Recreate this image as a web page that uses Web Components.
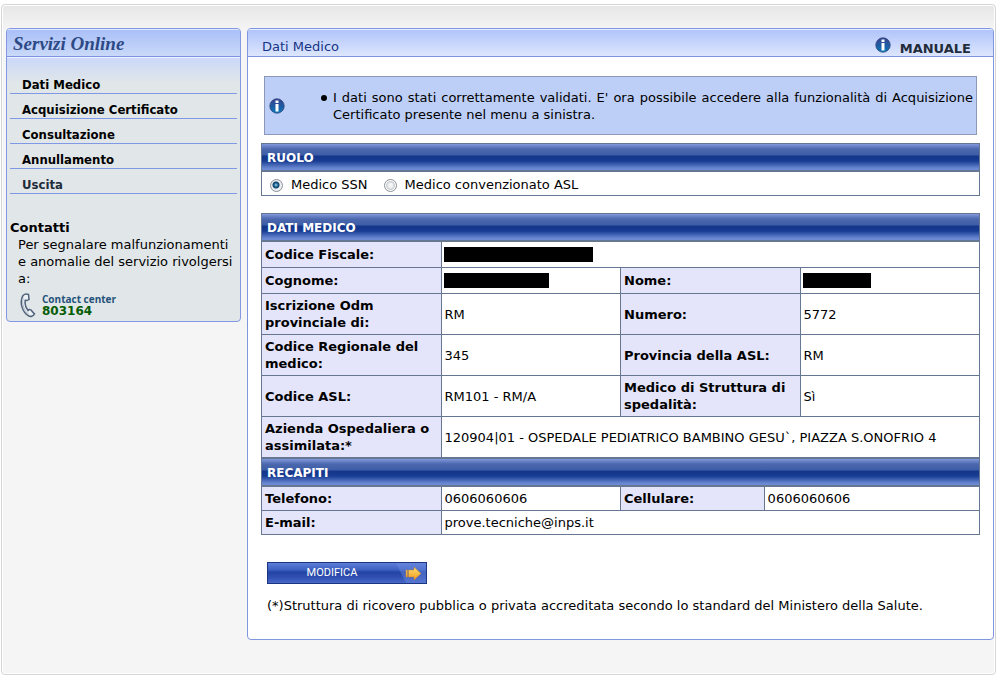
<!DOCTYPE html>
<html lang="it">
<head>
<meta charset="utf-8">
<meta name="viewport" content="width=device-width, initial-scale=1">
<title>Servizi Online - Dati Medico</title>
<style>
  body { margin: 4px 5px 6px 1px; background: #fff; color: #000; font: 13px/17px "DejaVu Sans", Verdana, sans-serif; }
</style>
</head>
<body>
<portal-frame>
  <side-menu slot="side" heading="Servizi Online">
    <menu-link href="#dati">Dati Medico</menu-link>
    <menu-link href="#acquisizione">Acquisizione Certificato</menu-link>
    <menu-link href="#consultazione">Consultazione</menu-link>
    <menu-link href="#annullamento">Annullamento</menu-link>
    <menu-link href="#uscita" muted>Uscita</menu-link>
    <contact-box slot="after"></contact-box>
  </side-menu>
  <content-panel heading="Dati Medico">
    <info-message>I dati sono stati correttamente validati. E' ora possibile accedere alla funzionalità di Acquisizione Certificato presente nel menu a sinistra.</info-message>
    <role-choice></role-choice>
    <doctor-data></doctor-data>
    <action-button>MODIFICA</action-button>
    <foot-note>(*)Struttura di ricovero pubblica o privata accreditata secondo lo standard del Ministero della Salute.</foot-note>
  </content-panel>
</portal-frame>

<script>
const define = (name, render) => customElements.define(name, class extends HTMLElement {
  constructor() {
    super();
    this.attachShadow({ mode: "open" });
  }
  connectedCallback() {
    this.shadowRoot.innerHTML = render(this);
  }
});

define("portal-frame", () => `
  <style>
    :host { display: block; border: 1px solid #d5d5d5; border-radius: 4px; padding: 23px 1px 34px 4px;
      background: linear-gradient(#e6e6e6, #f5f5f5 26px); box-shadow: inset 0 0 0 1px #fff; }
    .columns { display: grid; grid-template-columns: 235px minmax(0, 1fr); gap: 6px; align-items: start; }
  </style>
  <div class="columns"><slot name="side"></slot><slot></slot></div>`);

define("side-menu", el => `
  <style>
    :host { display: block; border: 1px solid #8397e2; border-radius: 4px; overflow: hidden; background: #e1e7e8; }
    h1 { box-sizing: border-box; height: 28px; margin: 0; padding: 0 6px; border-bottom: 1px solid #7f92e0;
      background: linear-gradient(#a9bff8, #c9d9f8); color: #2d4a86; box-shadow: inset 0 1px #dfe8ff;
      font: italic bold 19px/30px "Liberation Serif", Georgia, serif; }
    nav { padding: 11px 3px 25px; background: linear-gradient(#cbd8f8, #e1e7e8 26px); border-top: 1px solid #eef3ff; }
  </style>
  <h1>${el.getAttribute("heading")}</h1>
  <nav><slot></slot></nav>
  <slot name="after"></slot>`);

define("menu-link", el => `
  <style>
    :host { display: block; border-bottom: 1px solid #8099e6; }
    a { display: block; padding: 7px 12px 0; color: #000; text-decoration: none;
      font: bold 13px/17px "DejaVu Sans Condensed", Tahoma, sans-serif; }
    :host([muted]) a { color: #222c3a; }
  </style>
  <a href="${el.getAttribute("href")}"><slot></slot></a>`);

define("contact-box", () => `
  <style>
    :host { display: block; padding: 0 3px 3px; }
    h2 { margin: 0; font-size: 13px; line-height: 17px; }
    p { margin: 0 0 6px 8px; }
    .phone { display: flex; gap: 6px; margin: 0 8px; line-height: 12px; }
    .phone svg { width: 18px; height: 25px; flex: none; }
    .name { display: block; color: #24527a; font-weight: bold; font-size: 10px; font-family: "Open Sans", "Trebuchet MS", sans-serif; }
    .number { display: block; color: #075c07; font-size: 12px; }
  </style>
  <h2>Contatti</h2>
  <p>Per segnalare malfunzionamenti<br>e anomalie del servizio rivolgersi<br>a:</p>
  <div class="phone">
    <svg viewBox="0 0 18 25" aria-hidden="true">
      <path d="M5 2.500C6.500 1 9 .8 10.500 1.500L11 6.500C9.500 7.800 8 7.500 7.300 7.300C6.500 11 7.500 14.500 10 17.500C11.200 16 13.500 16.500 14 18.300L16.500 21C15.500 23.200 12.500 24 10.500 22.800C4.500 19.500 1 9 5 2.500Z" fill="#eef2f5" stroke="#50637c" stroke-width="1.500"/>
      <path d="M5.200 5C3.500 11 6 18 11 21.500" fill="none" stroke="#a9b4c2"/>
    </svg>
    <div><span class="name">Contact center</span><strong class="number">803164</strong></div>
  </div>`);

define("info-icon", () => `
  <style>
    :host { display: block; width: 16px; height: 16px; flex: none; }
    svg { display: block; width: 100%; height: 100%; }
  </style>
  <svg viewBox="0 0 16 16" aria-hidden="true">
    <defs><linearGradient id="disc" x2="0" y2="1"><stop stop-color="#39458f"/><stop offset=".5" stop-color="#1e5ba3"/><stop offset="1" stop-color="#087bbb"/></linearGradient></defs>
    <circle cx="8" cy="8" r="7.200" fill="url(#disc)" stroke="#2c4379" stroke-width=".8"/>
    <rect x="6.500" y="2.500" width="3" height="2.500" fill="#fff"/>
    <rect x="6.500" y="6" width="3" height="7.500" fill="#fff"/>
  </svg>`);

define("content-panel", el => `
  <style>
    :host { display: block; border: 1px solid #7f96e0; border-radius: 4px; overflow: hidden; background: #fff; }
    header { box-sizing: border-box; height: 28px; display: flex; align-items: center; justify-content: space-between;
      padding: 8px 22px 0 14px; border-bottom: 1px solid #7f92e0; background: linear-gradient(#afc3fa, #dde6fd); box-shadow: inset 0 1px #e6eeff; }
    h2 { margin: 0; font: inherit; color: #153485; }
    a { display: flex; align-items: flex-start; gap: 9px; height: 20px; color: #222c3a; font-weight: bold; text-decoration: none; line-height: 23px; }
    .body { padding: 19px 13px 25px; }
  </style>
  <header><h2>${el.getAttribute("heading")}</h2><a href="#manuale"><info-icon></info-icon><span>MANUALE</span></a></header>
  <div class="body"><slot></slot></div>`);

define("info-message", () => `
  <style>
    :host { display: flex; align-items: center; margin: 0 3px 8px; padding: 12px 3px 11px 4px; border: 1px solid #8c98b5; background: #bdcff7; }
    ul { flex: 1; margin: 0 0 0 36px; padding: 0; list-style: none; }
    li { display: flex; gap: 6px; text-align: justify; }
    li::before { content: ""; flex: none; width: 6px; height: 6px; margin: 6px 0 0; border-radius: 50%; background: #000; }
  </style>
  <info-icon></info-icon>
  <ul><li><span><slot></slot></span></li></ul>`);

define("section-title", () => `
  <style>
    :host { display: block; }
    h3 { box-sizing: border-box; height: 29px; margin: 0; padding: 2px 5px 0; border: 1px solid #667791; border-bottom-width: 2px;
      color: #fff; font-size: 12px; line-height: 24px;
      background: linear-gradient(#8298dc 0, #4c68ae 5px, #3d5da6 11px, #14368b 12px, #173c92 17px, #6785d0 24px, #6f8bd6 100%); }
  </style>
  <h3><slot></slot></h3>`);

define("role-choice", () => `
  <style>
    :host { display: block; margin-bottom: 17px; }
    .options { display: flex; gap: 16px; padding: 4px 8px 2px; border: 1px solid #667791; border-top: 0; }
    label { display: flex; align-items: center; gap: 8px; }
    input { appearance: none; width: 13px; height: 13px; margin: 2px 0 0; border: 1px solid #8b8f96; border-radius: 50%;
      background: radial-gradient(#f4f4f4 2px, #c9cdd0 4px, #fff 5px); }
    input:checked { background: radial-gradient(circle at 5px 5px, #9fd3ee 0, #176190 2px, #0f3c60 3px, #e9eef2 4px); }
  </style>
  <section-title>RUOLO</section-title>
  <div class="options" role="radiogroup" aria-label="Ruolo">
    <label><input type="radio" name="ruolo" checked>Medico SSN</label>
    <label><input type="radio" name="ruolo">Medico convenzionato ASL</label>
  </div>`);

define("hidden-value", () => `
  <style>
    :host { display: block; width: var(--size); height: 15px; margin: -1px 0 0 -1px; background: #000; }
  </style>`);

define("doctor-data", () => `
  <style>
    :host { display: block; margin-bottom: 27px; }
    table { width: 100%; table-layout: fixed; border-spacing: 0; border-left: 1px solid #667791; }
    th, td { padding: 3px; border: solid #667791; border-width: 0 1px 1px 0; text-align: left; vertical-align: middle; }
    th { background: #e4e5fa; }
    .tall td, .tall th { height: 19px; }
    .wide { width: 30%; }
    .narrow { width: 20%; }
  </style>
  <section-title>DATI MEDICO</section-title>
  <table>
    <colgroup><col><col><col><col></colgroup>
    <tr class="tall"><th scope="row">Codice Fiscale:</th><td colspan="3"><hidden-value style="--size: 149px"></hidden-value></td></tr>
    <tr class="tall"><th scope="row">Cognome:</th><td><hidden-value style="--size: 105px"></hidden-value></td><th scope="row">Nome:</th><td><hidden-value style="--size: 68px"></hidden-value></td></tr>
    <tr><th scope="row">Iscrizione Odm provinciale di:</th><td>RM</td><th scope="row">Numero:</th><td>5772</td></tr>
    <tr><th scope="row">Codice Regionale del medico:</th><td>345</td><th scope="row">Provincia della ASL:</th><td>RM</td></tr>
    <tr><th scope="row">Codice ASL:</th><td>RM101 - RM/A</td><th scope="row">Medico di Struttura di spedalità:</th><td>Sì</td></tr>
    <tr><th scope="row">Azienda Ospedaliera o assimilata:*</th><td colspan="3">120904|01 - OSPEDALE PEDIATRICO BAMBINO GESU\`, PIAZZA S.ONOFRIO 4</td></tr>
  </table>
  <section-title>RECAPITI</section-title>
  <table>
    <colgroup><col><col><col class="narrow"><col class="wide"></colgroup>
    <tr><th scope="row">Telefono:</th><td>0606060606</td><th scope="row">Cellulare:</th><td>0606060606</td></tr>
    <tr><th scope="row">E-mail:</th><td colspan="3">prove.tecniche@inps.it</td></tr>
  </table>`);

define("action-button", () => `
  <style>
    :host { display: block; margin: 0 6px 13px; }
    button { display: flex; align-items: center; width: 160px; height: 22px; padding: 0; border: 1px solid #1c3580; cursor: pointer;
      color: #fff; font: 11px/16px Roboto, Arial, sans-serif; background: linear-gradient(#5e7dd8 0, #3c5fc0 7px, #2344a3 9px, #2f4fb2 14px, #4867c6 100%); }
    span { flex: 1; text-align: center; }
    svg { width: 30px; height: 20px; flex: none; }
  </style>
  <button type="button"><span><slot></slot></span>
    <svg viewBox="0 0 30 20" aria-hidden="true">
      <defs><linearGradient id="gold" x2="0" y2="1"><stop stop-color="#ffe071"/><stop offset="1" stop-color="#f29a1d"/></linearGradient></defs>
      <path d="M0 0H30V20H10Z" fill="#6d8bdf" opacity=".45"/>
      <path d="M10 7H11.500V14H10ZM12.500 7H18V4L25 10.500L18 17V14H12.500Z" fill="url(#gold)" stroke="#c6822e" stroke-width=".5"/>
    </svg>
  </button>`);

define("foot-note", () => `
  <style>:host { display: block; margin: 0 6px; }</style>
  <slot></slot>`);
</script>
</body>
</html>
